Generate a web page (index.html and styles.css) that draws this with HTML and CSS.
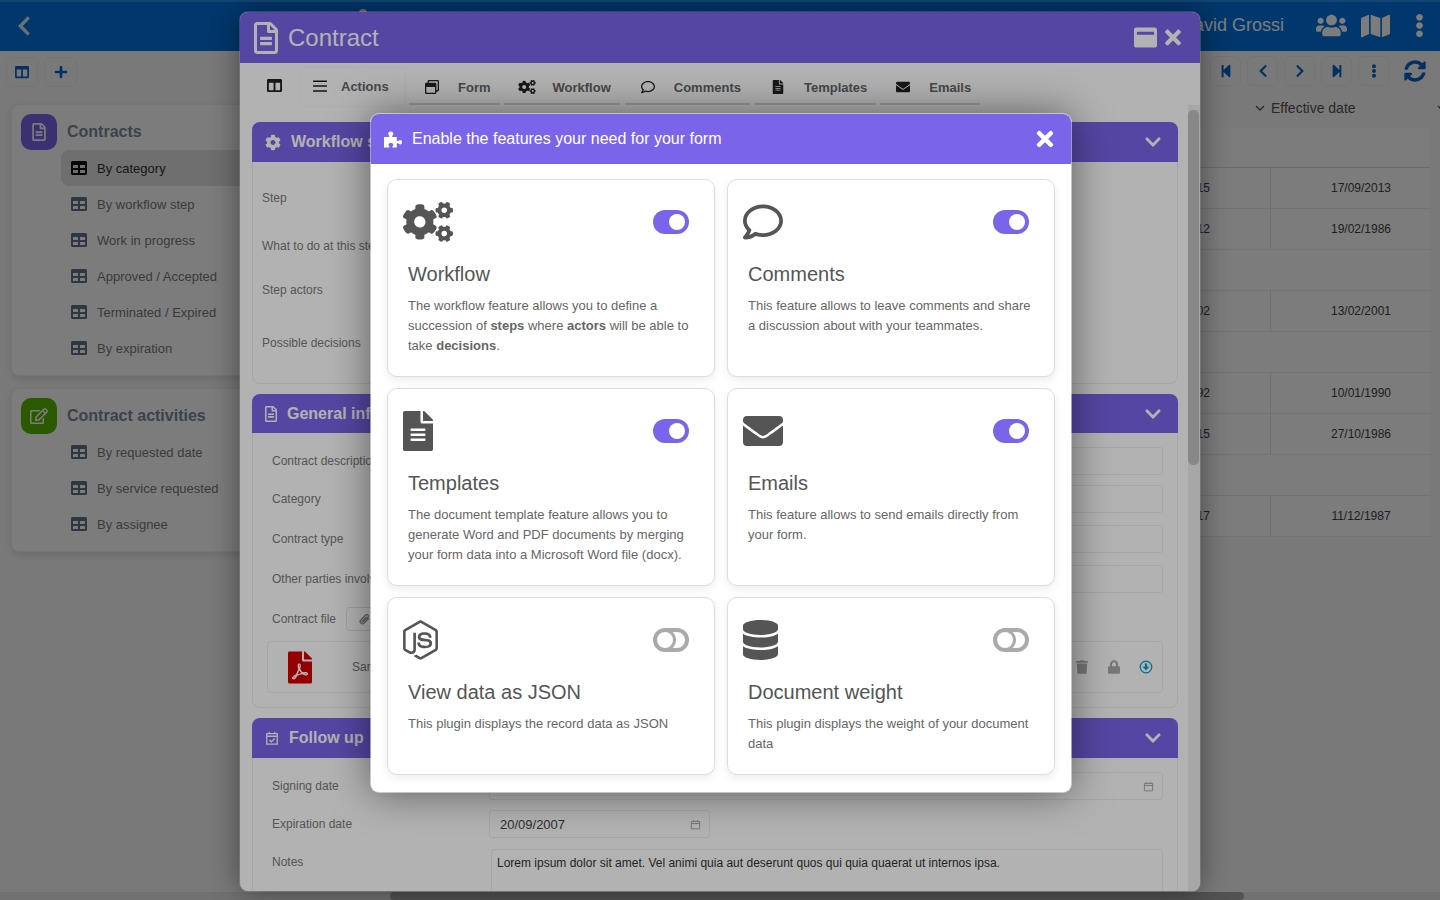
FILE: index.html
```html
<!DOCTYPE html>
<html lang="en">
<head>
  <meta charset="UTF-8" />
  <title>Contract</title>
  <link rel="stylesheet" href="styles.css">
</head>
<body>
  <!-- icon sprite -->
  <svg class="sprite" xmlns="http://www.w3.org/2000/svg">
    <symbol id="i-file" viewBox="0 0 384 512"><path d="M224 136V0H24C10.7 0 0 10.7 0 24v464c0 13.3 10.7 24 24 24h336c13.3 0 24-10.7 24-24V160H248c-13.2 0-24-10.8-24-24zm64 236c0 6.6-5.4 12-12 12H108c-6.6 0-12-5.4-12-12v-8c0-6.6 5.4-12 12-12h168c6.6 0 12 5.4 12 12v8zm0-64c0 6.6-5.4 12-12 12H108c-6.6 0-12-5.4-12-12v-8c0-6.6 5.4-12 12-12h168c6.6 0 12 5.4 12 12v8zm0-72v8c0 6.6-5.4 12-12 12H108c-6.6 0-12-5.4-12-12v-8c0-6.6 5.4-12 12-12h168c6.6 0 12 5.4 12 12zm96-114.1v6.1H256V0h6.1c6.4 0 12.5 2.5 17 7l97.9 98c4.5 4.5 7 10.6 7 16.9z"/></symbol>
    <symbol id="i-file-o" viewBox="0 0 384 512"><path d="M288 248v28c0 6.6-5.4 12-12 12H108c-6.6 0-12-5.4-12-12v-28c0-6.6 5.4-12 12-12h168c6.6 0 12 5.4 12 12zm-12 72H108c-6.6 0-12 5.4-12 12v28c0 6.6 5.4 12 12 12h168c6.6 0 12-5.4 12-12v-28c0-6.6-5.4-12-12-12zm108-188.1V464c0 26.5-21.5 48-48 48H48c-26.5 0-48-21.5-48-48V48C0 21.5 21.5 0 48 0h204.1C264.8 0 277 5.1 286 14.1L369.9 98c9 8.9 14.1 21.2 14.1 33.9zm-128-80V128h76.1L256 51.9zM336 464V176H232c-13.3 0-24-10.7-24-24V48H48v416h288z"/></symbol>
    <symbol id="i-envelope" viewBox="0 0 512 512"><path d="M502.3 190.8c3.9-3.1 9.7-.2 9.7 4.7V400c0 26.5-21.5 48-48 48H48c-26.5 0-48-21.5-48-48V195.6c0-5 5.7-7.8 9.7-4.7 22.4 17.4 52.1 39.5 154.1 113.6 21.1 15.4 56.7 47.8 92.2 47.6 35.7.3 72-32.8 92.3-47.6 102-74.1 131.6-96.3 154-113.7zM256 320c23.2.4 56.6-29.2 73.4-41.4 132.7-96.3 142.8-104.7 173.4-128.7 5.8-4.5 9.2-11.5 9.2-18.9v-19c0-26.5-21.5-48-48-48H48C21.5 64 0 85.5 0 112v19c0 7.4 3.4 14.3 9.2 18.9 30.6 23.9 40.7 32.4 173.4 128.7 16.8 12.2 50.2 41.8 73.4 41.4z"/></symbol>
    <symbol id="i-database" viewBox="0 0 448 512"><path d="M448 73.143v45.714C448 159.143 347.667 192 224 192S0 159.143 0 118.857V73.143C0 32.857 100.333 0 224 0s224 32.857 224 73.143zM448 176v102.857C448 319.143 347.667 352 224 352S0 319.143 0 278.857V176c48.125 33.143 136.208 48.572 224 48.572S399.874 209.143 448 176zm0 160v102.857C448 479.143 347.667 512 224 512S0 479.143 0 438.857V336c48.125 33.143 136.208 48.572 224 48.572S399.874 369.143 448 336z"/></symbol>
    <symbol id="i-comment" viewBox="0 0 512 512"><path d="M256 32C114.6 32 0 125.1 0 240c0 47.6 19.9 91.2 52.9 126.3C38 405.7 7 439.1 6.5 439.5c-6.6 7-8.4 17.2-4.6 26S14.4 480 24 480c61.5 0 110-25.7 139.1-46.3C192 442.8 223.2 448 256 448c141.4 0 256-93.1 256-208S397.4 32 256 32zm0 368c-26.7 0-53.1-4.1-78.4-12.1l-22.7-7.2-19.5 13.8c-14.3 10.1-33.9 21.4-57.5 29 7.3-12.1 14.4-25.7 19.9-40.2l10.6-28.1-20.6-21.8C69.7 314.1 48 282.2 48 240c0-88.2 93.3-160 208-160s208 71.8 208 160-93.3 160-208 160z"/></symbol>
    <symbol id="i-cogs" viewBox="0 0 640 512"><path d="M512.1 191l-8.2 14.3c-3 5.3-9.4 7.5-15.1 5.4-11.8-4.4-22.6-10.7-32.1-18.6-4.6-3.8-5.8-10.5-2.8-15.7l8.2-14.3c-6.9-8-12.3-17.3-15.9-27.4h-16.5c-6 0-11.2-4.3-12.2-10.3-2-12-2.1-24.6 0-37.1 1-6 6.2-10.4 12.2-10.4h16.5c3.6-10.1 9-19.4 15.9-27.4l-8.2-14.3c-3-5.2-1.9-11.9 2.8-15.7 9.5-7.9 20.4-14.2 32.1-18.6 5.7-2.1 12.1.1 15.1 5.4l8.2 14.3c10.5-1.9 21.2-1.9 31.7 0L552 6.3c3-5.3 9.4-7.5 15.1-5.4 11.8 4.4 22.6 10.7 32.1 18.6 4.6 3.8 5.8 10.5 2.8 15.7l-8.2 14.3c6.9 8 12.3 17.3 15.9 27.4h16.5c6 0 11.2 4.3 12.2 10.3 2 12 2.1 24.6 0 37.1-1 6-6.2 10.4-12.2 10.4h-16.5c-3.6 10.1-9 19.4-15.9 27.4l8.2 14.3c3 5.2 1.9 11.9-2.8 15.7-9.5 7.9-20.4 14.2-32.1 18.6-5.7 2.1-12.1-.1-15.1-5.4l-8.2-14.3c-10.4 1.9-21.2 1.9-31.7 0zm-10.5-58.8c38.5 29.6 82.4-14.3 52.8-52.8-38.5-29.7-82.4 14.3-52.8 52.8zM386.3 286.1l33.7 16.8c10.1 5.8 14.5 18.1 10.5 29.1-8.9 24.2-26.4 46.4-42.6 65.8-7.4 8.9-20.2 11.1-30.3 5.3l-29.1-16.8c-16 13.7-34.6 24.6-54.9 31.7v33.6c0 11.6-8.3 21.6-19.7 23.6-24.6 4.2-50.4 4.4-75.9 0-11.5-2-20-11.9-20-23.6V418c-20.3-7.2-38.9-18-54.9-31.7L74 403c-10 5.8-22.9 3.6-30.3-5.3-16.2-19.4-33.3-41.6-42.2-65.7-4-10.9.4-23.2 10.5-29.1l33.3-16.8c-3.9-20.9-3.9-42.4 0-63.4L12 205.8c-10.1-5.8-14.6-18.1-10.5-29 8.9-24.2 26-46.4 42.2-65.8 7.4-8.9 20.2-11.1 30.3-5.3l29.1 16.8c16-13.7 34.6-24.6 54.9-31.7V57.1c0-11.5 8.2-21.5 19.6-23.5 24.6-4.2 50.5-4.4 76-.1 11.5 2 20 11.9 20 23.6v33.6c20.3 7.2 38.9 18 54.9 31.7l29.1-16.8c10-5.8 22.9-3.6 30.3 5.3 16.2 19.4 33.2 41.6 42.1 65.8 4 10.9.1 23.2-10 29.1l-33.7 16.8c3.9 21 3.9 42.5 0 63.5zm-117.6 21.1c59.2-77-28.7-164.9-105.7-105.7-59.2 77 28.7 164.9 105.7 105.7zm243.4 182.7l-8.2 14.3c-3 5.3-9.4 7.5-15.1 5.4-11.8-4.4-22.6-10.7-32.1-18.6-4.6-3.8-5.8-10.5-2.8-15.7l8.2-14.3c-6.9-8-12.3-17.3-15.9-27.4h-16.5c-6 0-11.2-4.3-12.2-10.3-2-12-2.1-24.6 0-37.1 1-6 6.2-10.4 12.2-10.4h16.5c3.6-10.1 9-19.4 15.9-27.4l-8.2-14.3c-3-5.2-1.9-11.9 2.8-15.7 9.5-7.9 20.4-14.2 32.1-18.6 5.7-2.1 12.1.1 15.1 5.4l8.2 14.3c10.5-1.9 21.2-1.9 31.7 0l8.2-14.3c3-5.3 9.4-7.5 15.1-5.4 11.8 4.4 22.6 10.7 32.1 18.6 4.6 3.8 5.8 10.5 2.8 15.7l-8.2 14.3c6.9 8 12.3 17.3 15.9 27.4h16.5c6 0 11.2 4.3 12.2 10.3 2 12 2.1 24.6 0 37.1-1 6-6.2 10.4-12.2 10.4h-16.5c-3.6 10.1-9 19.4-15.9 27.4l8.2 14.3c3 5.2 1.9 11.9-2.8 15.7-9.5 7.9-20.4 14.2-32.1 18.6-5.7 2.1-12.1-.1-15.1-5.4l-8.2-14.3c-10.4 1.9-21.2 1.9-31.7 0zM501.6 431c38.5 29.6 82.4-14.3 52.8-52.8-38.5-29.6-82.4 14.3-52.8 52.8z"/></symbol>
    <symbol id="i-node" viewBox="0 0 448 512"><path d="M224 508c-6.7 0-13.5-1.8-19.4-5.2l-61.7-36.5c-9.2-5.2-4.7-7-1.7-8 12.3-4.3 14.8-5.2 27.9-12.7 1.4-.8 3.2-.5 4.6.4l47.4 28.1c1.7 1 4.1 1 5.7 0l184.7-106.6c1.7-1 2.8-3 2.8-5V149.3c0-2.1-1.1-4-2.9-5.1L226.8 37.7c-1.7-1-4-1-5.7 0L36.6 144.3c-1.8 1-2.9 3-2.9 5.1v213.1c0 2 1.1 4 2.9 4.9l50.6 29.2c27.5 13.7 44.3-2.4 44.3-18.7V167.5c0-3 2.4-5.3 5.4-5.3h23.4c2.9 0 5.4 2.3 5.4 5.3V378c0 36.6-20 57.6-54.7 57.6-10.7 0-19.1 0-42.5-11.6l-48.4-27.9C8.1 389.2.7 376.3.7 362.4V149.3c0-13.8 7.4-26.8 19.4-33.7L204.6 9c11.7-6.6 27.2-6.6 38.8 0l184.7 106.7c12 6.9 19.4 19.8 19.4 33.7v213.1c0 13.8-7.4 26.7-19.4 33.7L243.4 502.8c-5.9 3.4-12.6 5.2-19.4 5.2zm149.1-210.1c0-39.9-27-50.5-83.7-58-57.4-7.6-63.2-11.5-63.2-24.9 0-11.1 4.9-25.9 47.4-25.9 37.9 0 51.9 8.2 57.7 33.8.5 2.4 2.7 4.2 5.2 4.2h24c1.5 0 2.9-.6 3.9-1.7s1.5-2.6 1.4-4.1c-3.7-44.1-33-64.6-92.2-64.6-52.7 0-84.1 22.2-84.1 59.5 0 40.4 31.3 51.6 81.8 56.6 60.5 5.9 65.2 14.8 65.2 26.7 0 20.6-16.6 29.4-55.5 29.4-48.9 0-59.6-12.3-63.2-36.6-.4-2.6-2.6-4.5-5.3-4.5h-23.9c-3 0-5.3 2.4-5.3 5.3 0 31.1 16.9 68.2 97.8 68.2 58.4-.1 92-23.2 92-63.4z"/></symbol>
    <symbol id="i-puzzle" viewBox="0 3.500 19 17"><path d="M0 9.500h4.600c1 0 1-.9.4-1.600-.5-.6-.8-1.100-.8-1.900C4.200 4.800 5.400 4 6.800 4s2.600.8 2.600 2c0 .8-.3 1.300-.8 1.900-.6.7-.6 1.600.4 1.600h3.800v3.400c0 1 .9 1 1.600.4.6-.5 1.100-.8 1.900-.8 1.200 0 1.700 1 1.700 2.200s-.5 2.200-1.700 2.200c-.8 0-1.300-.3-1.900-.8-.7-.6-1.600-.6-1.600.4V20H9c-.8 0-.9-.8-.4-1.300.5-.5.7-.9.7-1.500 0-1-1-1.700-2.400-1.700s-2.400.7-2.400 1.700c0 .6.2 1 .7 1.500.5.5.4 1.300-.4 1.300H0z"/></symbol>
    <symbol id="i-chev-left" viewBox="0 0 320 512"><path d="M34.52 239.03L228.87 44.69c9.37-9.37 24.57-9.37 33.94 0l22.67 22.67c9.36 9.36 9.37 24.52.04 33.9L131.49 256l154.02 154.75c9.34 9.38 9.32 24.54-.04 33.9l-22.67 22.67c-9.37 9.37-24.57 9.37-33.94 0L34.52 272.97c-9.37-9.37-9.37-24.57 0-33.94z"/></symbol>
    <symbol id="i-chev-right" viewBox="0 0 320 512"><path d="M285.476 272.971L91.132 467.314c-9.373 9.373-24.569 9.373-33.941 0l-22.667-22.667c-9.357-9.357-9.375-24.522-.04-33.901L188.505 256 34.484 101.255c-9.335-9.379-9.317-24.544.04-33.901l22.667-22.667c9.373-9.373 24.569-9.373 33.941 0L285.475 239.03c9.373 9.372 9.373 24.568.001 33.941z"/></symbol>
    <symbol id="i-chev-down" viewBox="0 0 448 512"><path d="M207.029 381.476L12.686 187.132c-9.373-9.373-9.373-24.569 0-33.941l22.667-22.667c9.357-9.357 24.522-9.375 33.901-.04L224 284.505l154.745-154.021c9.379-9.335 24.544-9.317 33.901.04l22.667 22.667c9.373 9.373 9.373 24.569 0 33.941L240.971 381.476c-9.373 9.372-24.569 9.372-33.942 0z"/></symbol>
    <symbol id="i-chev-thin" viewBox="0 0 10 10"><path fill="none" stroke="currentColor" stroke-width="1.400" d="M1 3l4 4 4-4"/></symbol>
    <symbol id="i-times" viewBox="0 0 352 512"><path d="M242.72 256l100.07-100.07c12.28-12.28 12.28-32.19 0-44.48l-22.24-22.24c-12.28-12.28-32.19-12.28-44.48 0L176 189.28 75.93 89.21c-12.28-12.28-32.19-12.28-44.48 0L9.21 111.45c-12.28 12.28-12.28 32.19 0 44.48L109.28 256 9.21 356.07c-12.28 12.28-12.28 32.19 0 44.48l22.24 22.24c12.28 12.28 32.2 12.28 44.48 0L176 322.72l100.07 100.07c12.28 12.28 32.2 12.28 44.48 0l22.24-22.24c12.28-12.28 12.28-32.19 0-44.48L242.72 256z"/></symbol>
    <symbol id="i-table" viewBox="0 0 512 512"><path d="M464 32H48C21.49 32 0 53.49 0 80v352c0 26.51 21.49 48 48 48h416c26.51 0 48-21.49 48-48V80c0-26.51-21.49-48-48-48zM224 416H64v-96h160v96zm0-160H64v-96h160v96zm224 160H288v-96h160v96zm0-160H288v-96h160v96z"/></symbol>
    <symbol id="i-users" viewBox="0 0 640 512"><path d="M96 224c35.3 0 64-28.7 64-64s-28.7-64-64-64-64 28.7-64 64 28.7 64 64 64zm448 0c35.3 0 64-28.7 64-64s-28.7-64-64-64-64 28.7-64 64 28.7 64 64 64zm32 32h-64c-17.6 0-33.5 7.1-45.1 18.6 40.3 22.1 68.9 62 75.1 109.4h66c17.7 0 32-14.3 32-32v-32c0-35.3-28.7-64-64-64zm-256 0c61.9 0 112-50.1 112-112S381.9 32 320 32 208 82.1 208 144s50.1 112 112 112zm76.8 32h-8.3c-20.8 10-43.9 16-68.5 16s-47.6-6-68.5-16h-8.3C179.6 288 128 339.6 128 403.2V432c0 26.5 21.5 48 48 48h288c26.5 0 48-21.5 48-48v-28.8c0-63.6-51.6-115.2-115.2-115.2zm-223.7-13.4C161.5 263.1 145.6 256 128 256H64c-35.3 0-64 28.7-64 64v32c0 17.7 14.3 32 32 32h65.9c6.3-47.4 34.9-87.3 75.2-109.4z"/></symbol>
    <symbol id="i-map" viewBox="0 0 576 512"><path d="M0 117.66v346.32c0 11.32 11.43 19.06 21.94 14.86L160 416V32L20.12 87.95A32.006 32.006 0 0 0 0 117.66zM192 416l192 64V96L192 32v384zM554.06 33.16L416 96v384l139.88-55.95A31.996 31.996 0 0 0 576 394.34V48.02c0-11.32-11.43-19.06-21.94-14.86z"/></symbol>
    <symbol id="i-dots" viewBox="0 0 192 512"><path d="M96 184c39.8 0 72 32.2 72 72s-32.2 72-72 72-72-32.2-72-72 32.2-72 72-72zM24 80c0 39.8 32.2 72 72 72s72-32.2 72-72S135.8 8 96 8 24 40.2 24 80zm0 352c0 39.8 32.2 72 72 72s72-32.2 72-72-32.2-72-72-72-72 32.2-72 72z"/></symbol>
    <symbol id="i-plus" viewBox="0 0 448 512"><path d="M416 208H272V64c0-17.67-14.33-32-32-32h-32c-17.67 0-32 14.33-32 32v144H32c-17.67 0-32 14.33-32 32v32c0 17.67 14.33 32 32 32h144v144c0 17.67 14.33 32 32 32h32c17.67 0 32-14.33 32-32V304h144c17.67 0 32-14.33 32-32v-32c0-17.67-14.33-32-32-32z"/></symbol>
    <symbol id="i-columns" viewBox="0 0 512 512"><path d="M464 32H48C21.49 32 0 53.49 0 80v352c0 26.51 21.49 48 48 48h416c26.51 0 48-21.49 48-48V80c0-26.51-21.49-48-48-48zM224 416H64V160h160v256zm224 0H288V160h160v256z"/></symbol>
    <symbol id="i-bars" viewBox="0 0 448 512"><path d="M0 76h448v48H0zM0 232h448v48H0zM0 388h448v48H0z"/></symbol>
    <symbol id="i-window" viewBox="0 0 512 512"><path d="M464 0H144c-26.5 0-48 21.5-48 48v48H48c-26.5 0-48 21.5-48 48v320c0 26.5 21.5 48 48 48h320c26.5 0 48-21.5 48-48v-48h48c26.5 0 48-21.5 48-48V48c0-26.5-21.5-48-48-48zm-96 464H48V256h320v208zm96-96h-48V144c0-26.5-21.5-48-48-48H144V48h320v320z"/></symbol>
    <symbol id="i-maximize" viewBox="0 0 512 512"><path d="M464 32H48C21.5 32 0 53.5 0 80v352c0 26.5 21.5 48 48 48h416c26.5 0 48-21.5 48-48V80c0-26.5-21.5-48-48-48zm-16 160H64v-48c0-8.8 7.2-16 16-16h352c8.8 0 16 7.2 16 16v48z"/></symbol>
    <symbol id="i-cog" viewBox="0 0 512 512"><path d="M487.4 315.7l-42.6-24.6c4.3-23.2 4.3-47 0-70.2l42.6-24.6c4.9-2.8 7.1-8.6 5.5-14-11.1-35.6-30-67.8-54.7-94.6-3.8-4.1-10-5.1-14.8-2.3L380.8 110c-17.9-15.4-38.5-27.3-60.8-35.1V25.8c0-5.6-3.9-10.5-9.4-11.7-36.7-8.2-74.3-7.8-109.2 0-5.5 1.2-9.4 6.1-9.4 11.7V75c-22.2 7.9-42.8 19.8-60.8 35.1L88.7 85.5c-4.9-2.8-11-1.9-14.8 2.3-24.7 26.7-43.6 58.9-54.7 94.6-1.7 5.4.6 11.2 5.5 14L67.3 221c-4.3 23.2-4.3 47 0 70.2l-42.6 24.6c-4.9 2.8-7.1 8.6-5.5 14 11.1 35.6 30 67.8 54.7 94.6 3.8 4.1 10 5.1 14.8 2.3l42.6-24.6c17.9 15.4 38.5 27.3 60.8 35.1v49.2c0 5.6 3.9 10.5 9.4 11.7 36.7 8.2 74.3 7.8 109.2 0 5.5-1.2 9.4-6.1 9.4-11.7v-49.2c22.2-7.9 42.8-19.8 60.8-35.1l42.6 24.6c4.9 2.8 11 1.9 14.8-2.3 24.7-26.7 43.6-58.9 54.7-94.6 1.5-5.5-.7-11.3-5.6-14.1zM256 336c-44.1 0-80-35.9-80-80s35.9-80 80-80 80 35.9 80 80-35.9 80-80 80z"/></symbol>
    <symbol id="i-sync" viewBox="0 0 512 512"><path d="M370.72 133.28C339.458 104.008 298.888 87.962 255.848 88c-77.458.068-144.328 53.178-162.791 126.85-1.344 5.363-6.122 9.15-11.651 9.15H24.103c-7.498 0-13.194-6.807-11.807-14.176C33.933 94.924 134.813 8 256 8c66.448 0 126.791 26.136 171.315 68.685L463.03 40.97C478.149 25.851 504 36.559 504 57.941V192c0 13.255-10.745 24-24 24H345.941c-21.382 0-32.09-25.851-16.971-40.971l41.75-41.749zM32 296h134.059c21.382 0 32.09 25.851 16.971 40.971l-41.75 41.75c31.262 29.273 71.835 45.319 114.876 45.28 77.418-.07 144.315-53.144 162.787-126.849 1.344-5.363 6.122-9.15 11.651-9.15h57.304c7.498 0 13.194 6.807 11.807 14.176C478.067 417.076 377.187 504 256 504c-66.448 0-126.791-26.136-171.315-68.685L48.97 471.03C33.851 486.149 8 475.441 8 454.059V320c0-13.255 10.745-24 24-24z"/></symbol>
    <symbol id="i-step-back" viewBox="0 0 448 512"><path d="M64 468V44c0-6.6 5.4-12 12-12h48c6.6 0 12 5.4 12 12v176.4l195.5-181C352.1 22.3 384 36.6 384 64v384c0 27.4-31.9 41.7-52.5 24.6L136 292.7V468c0 6.6-5.4 12-12 12H76c-6.6 0-12-5.4-12-12z"/></symbol>
    <symbol id="i-step-fwd" viewBox="0 0 448 512"><path d="M384 44v424c0 6.6-5.4 12-12 12h-48c-6.6 0-12-5.4-12-12V291.6l-195.5 181C95.9 489.7 64 475.4 64 448V64c0-27.4 31.9-41.7 52.5-24.6L312 219.3V44c0-6.6 5.4-12 12-12h48c6.6 0 12 5.4 12 12z"/></symbol>
    <symbol id="i-trash" viewBox="0 0 448 512"><path d="M432 32H312l-9.4-18.7A24 24 0 0 0 281.1 0H166.8a23.72 23.72 0 0 0-21.4 13.3L136 32H16A16 16 0 0 0 0 48v32a16 16 0 0 0 16 16h416a16 16 0 0 0 16-16V48a16 16 0 0 0-16-16zM53.2 467a48 48 0 0 0 47.9 45h245.8a48 48 0 0 0 47.9-45L416 128H32z"/></symbol>
    <symbol id="i-lock" viewBox="0 0 448 512"><path d="M400 224h-24v-72C376 68.2 307.8 0 224 0S72 68.2 72 152v72H48c-26.5 0-48 21.5-48 48v192c0 26.5 21.5 48 48 48h352c26.5 0 48-21.5 48-48V272c0-26.5-21.5-48-48-48zm-104 0H152v-72c0-39.7 32.3-72 72-72s72 32.3 72 72v72z"/></symbol>
    <symbol id="i-edit" viewBox="0 0 576 512"><path d="M402.3 344.9l32-32c5-5 13.7-1.5 13.7 5.7V464c0 26.5-21.5 48-48 48H48c-26.5 0-48-21.5-48-48V112c0-26.5 21.5-48 48-48h273.5c7.1 0 10.7 8.6 5.7 13.7l-32 32c-1.5 1.5-3.5 2.3-5.7 2.3H48v352h352V350.5c0-2.1.8-4.1 2.3-5.6zm156.6-201.8L296.3 405.7l-90.4 10c-26.2 2.9-48.5-19.2-45.6-45.6l10-90.4L432.9 17.1c22.9-22.9 59.9-22.9 82.7 0l43.2 43.2c22.9 22.9 22.9 60 .1 82.8zM460.1 174L402 115.9 216.2 301.8l-7.3 65.3 65.3-7.3L460.1 174zm64.8-79.7l-43.2-43.2c-4.1-4.1-10.8-4.1-14.8 0L436 82l58.1 58.1 30.9-30.9c4-4.2 4-10.8-.1-14.9z"/></symbol>
    <symbol id="i-pdf" viewBox="0 0 384 512"><path d="M181.9 256.1c-5-16-4.9-46.9-2-46.9 8.4 0 7.6 36.9 2 46.9zm-1.7 47.2c-7.7 20.2-17.3 43.3-28.4 62.7 18.3-7 39-17.2 62.9-21.9-12.7-9.6-24.9-23.4-34.5-40.8zM86.1 428.1c0 .8 13.2-5.4 34.9-40.2-6.7 6.3-29.1 24.5-34.9 40.2zM248 160h136v328c0 13.3-10.7 24-24 24H24c-13.3 0-24-10.7-24-24V24C0 10.7 10.7 0 24 0h200v136c0 13.2 10.8 24 24 24zm-8 171.8c-20-12.2-33.3-29-42.7-53.8 4.5-18.5 11.6-46.6 6.2-64.2-4.7-29.4-42.4-26.5-47.8-6.8-5 18.3-.4 44.1 8.1 77-11.6 27.6-28.7 64.6-40.8 85.8-.1 0-.1.1-.2.1-27.1 13.9-73.6 44.5-54.5 68 5.6 6.9 16 10 21.5 10 17.9 0 35.7-18 61.1-61.8 25.8-8.5 54.1-19.1 79-23.2 21.7 11.8 47.1 19.5 64 19.5 29.2 0 31.2-32 19.7-43.4-13.9-13.6-54.3-9.7-73.6-7.2zM377 105L279 7c-4.5-4.5-10.6-7-17-7h-6v128h128v-6.1c0-6.3-2.5-12.4-7-16.9zm-74.1 255.3c4.1-2.7-2.5-11.9-42.8-9 37.1 15.8 42.8 9 42.8 9z"/></symbol>
    <symbol id="i-cal" viewBox="0 0 16 16"><path fill="none" stroke="currentColor" stroke-width="1.4" d="M2 3.500h12v10.800H2zM2 6.500h12M5 1.500v2M11 1.500v2"/></symbol>
    <symbol id="i-cal-check" viewBox="0 0 16 16"><path fill="none" stroke="currentColor" stroke-width="1.5" d="M2 3h12v12H2zM2 6h12M5 .8V3M11 .8V3M5 10.300l2.200 2L11 8.500"/></symbol>
    <symbol id="i-clip" viewBox="0 0 16 16"><path fill="none" stroke="currentColor" stroke-width="1.5" stroke-linecap="round" d="M13 7l-5.500 5.500a2.800 2.800 0 0 1-4-4L9.500 2.500a1.900 1.900 0 0 1 2.700 2.700L6.500 11a.9.9 0 0 1-1.300-1.300L10 5"/></symbol>
    <symbol id="i-down" viewBox="0 0 16 16"><circle cx="8" cy="8" r="6.600" fill="none" stroke="currentColor" stroke-width="1.4"/><path d="M6.700 4h2.600v3.600H12L8 11.800 4 7.600h2.700z"/></symbol>
  </svg>

  <!-- page behind the windows -->
  <div class="app">
    <header class="topbar">
      <svg class="ico back"><use href="#i-chev-left"/></svg>
      <span class="topbar-dot"></span>
      <span class="user-name">David Grossi</span>
      <svg class="ico topbar-users"><use href="#i-users"/></svg>
      <svg class="ico topbar-map"><use href="#i-map"/></svg>
      <svg class="ico topbar-dots"><use href="#i-dots"/></svg>
    </header>

    <div class="toolbar">
      <button class="tool-btn"><svg class="ico"><use href="#i-columns"/></svg></button>
      <button class="tool-btn"><svg class="ico"><use href="#i-plus"/></svg></button>
      <div class="pager">
        <button class="tool-btn"><svg class="ico"><use href="#i-step-back"/></svg></button>
        <button class="tool-btn"><svg class="ico"><use href="#i-chev-left"/></svg></button>
        <button class="tool-btn"><svg class="ico"><use href="#i-chev-right"/></svg></button>
        <button class="tool-btn"><svg class="ico"><use href="#i-step-fwd"/></svg></button>
        <button class="tool-btn"><svg class="ico"><use href="#i-dots"/></svg></button>
        <svg class="ico refresh"><use href="#i-sync"/></svg>
      </div>
    </div>

    <main class="main">
      <nav class="sidebar">
        <section class="menu-card">
          <div class="menu-head">
            <span class="menu-icon purple"><svg class="ico"><use href="#i-file-o"/></svg></span>
            <span class="menu-title">Contracts</span>
          </div>
          <a class="menu-item active"><svg class="ico"><use href="#i-table"/></svg>By category</a>
          <a class="menu-item"><svg class="ico"><use href="#i-table"/></svg>By workflow step</a>
          <a class="menu-item"><svg class="ico"><use href="#i-table"/></svg>Work in progress</a>
          <a class="menu-item"><svg class="ico"><use href="#i-table"/></svg>Approved / Accepted</a>
          <a class="menu-item"><svg class="ico"><use href="#i-table"/></svg>Terminated / Expired</a>
          <a class="menu-item"><svg class="ico"><use href="#i-table"/></svg>By expiration</a>
        </section>
        <section class="menu-card">
          <div class="menu-head">
            <span class="menu-icon green"><svg class="ico"><use href="#i-edit"/></svg></span>
            <span class="menu-title">Contract activities</span>
          </div>
          <a class="menu-item"><svg class="ico"><use href="#i-table"/></svg>By requested date</a>
          <a class="menu-item"><svg class="ico"><use href="#i-table"/></svg>By service requested</a>
          <a class="menu-item"><svg class="ico"><use href="#i-table"/></svg>By assignee</a>
        </section>
      </nav>

      <div class="table-wrap">
        <div class="t-head">
          <span class="t-th first"></span>
          <span class="t-th"><svg class="ico"><use href="#i-chev-thin"/></svg>Effective date</span>
          <span class="t-th"><svg class="ico"><use href="#i-chev-thin"/></svg></span>
        </div>
        <div class="t-filter"></div>
        <div class="t-row"><span class="t-cell left">15</span><span class="t-cell">17/09/2013</span></div>
        <div class="t-row"><span class="t-cell left">12</span><span class="t-cell">19/02/1986</span></div>
        <div class="t-row group"></div>
        <div class="t-row"><span class="t-cell left">02</span><span class="t-cell">13/02/2001</span></div>
        <div class="t-row group"></div>
        <div class="t-row"><span class="t-cell left">92</span><span class="t-cell">10/01/1990</span></div>
        <div class="t-row"><span class="t-cell left">15</span><span class="t-cell">27/10/1986</span></div>
        <div class="t-row group"></div>
        <div class="t-row"><span class="t-cell left">17</span><span class="t-cell">11/12/1987</span></div>
      </div>
    </main>

    <div class="page-scroll"><span class="page-scroll-thumb"></span></div>
  </div>

  <div class="dim"></div>

  <!-- record window -->
  <div class="window">
    <div class="win-head">
      <svg class="ico win-icon"><use href="#i-file-o"/></svg>
      <span class="win-title">Contract</span>
      <svg class="ico win-max"><use href="#i-maximize"/></svg>
      <svg class="ico win-close"><use href="#i-times"/></svg>
    </div>

    <div class="win-tools">
      <span class="win-split"><svg class="ico"><use href="#i-columns"/></svg></span>
      <span class="win-actions"><svg class="ico"><use href="#i-bars"/></svg>Actions</span>
      <a class="tab"><svg class="ico"><use href="#i-window"/></svg>Form</a>
      <a class="tab"><svg class="ico wide"><use href="#i-cogs"/></svg>Workflow</a>
      <a class="tab"><svg class="ico"><use href="#i-comment"/></svg>Comments</a>
      <a class="tab"><svg class="ico"><use href="#i-file"/></svg>Templates</a>
      <a class="tab"><svg class="ico"><use href="#i-envelope"/></svg>Emails</a>
    </div>

    <div class="win-body">
      <div class="win-scroll"><span class="win-thumb"></span></div>

      <section class="panel">
        <div class="panel-head">
          <svg class="ico"><use href="#i-cog"/></svg>
          <span class="panel-title">Workflow step</span>
          <svg class="ico chev"><use href="#i-chev-down"/></svg>
        </div>
        <div class="panel-body wf">
          <div class="wf-row r48">Step</div>
          <div class="wf-row r48">What to do at this step</div>
          <div class="wf-row r40">Step actors</div>
          <div class="wf-row r66">Possible decisions</div>
        </div>
      </section>

      <section class="panel">
        <div class="panel-head low">
          <svg class="ico narrow"><use href="#i-file-o"/></svg>
          <span class="panel-title">General information</span>
          <svg class="ico chev"><use href="#i-chev-down"/></svg>
        </div>
        <div class="panel-body form">
          <div class="field f38"><label>Contract description</label><span class="input"></span></div>
          <div class="field f37"><label>Category</label><span class="input"></span></div>
          <div class="field f44"><label>Contract type</label><span class="input"></span></div>
          <div class="field f36"><label>Other parties involved</label><span class="input"></span></div>
          <div class="field f44"><label>Contract file</label><button class="clip-btn"><svg class="ico"><use href="#i-clip"/></svg></button></div>
          <div class="file-row">
            <svg class="ico file-pdf"><use href="#i-pdf"/></svg>
            <span class="file-name">Sample.pdf</span>
            <svg class="ico file-act"><use href="#i-trash"/></svg>
            <svg class="ico file-act"><use href="#i-lock"/></svg>
            <svg class="ico file-act teal"><use href="#i-down"/></svg>
          </div>
        </div>
      </section>

      <section class="panel">
        <div class="panel-head">
          <svg class="ico mid"><use href="#i-cal-check"/></svg>
          <span class="panel-title">Follow up</span>
          <svg class="ico chev"><use href="#i-chev-down"/></svg>
        </div>
        <div class="panel-body form">
          <div class="field f38"><label>Signing date</label><span class="input date"><svg class="ico"><use href="#i-cal"/></svg></span></div>
          <div class="field f38"><label>Expiration date</label><span class="input date short">20/09/2007<svg class="ico"><use href="#i-cal"/></svg></span></div>
          <div class="field notes"><label>Notes</label><div class="textarea">Lorem ipsum dolor sit amet. Vel animi quia aut deserunt quos qui quia quaerat ut internos ipsa.</div></div>
        </div>
      </section>
    </div>
  </div>

  <div class="dim"></div>

  <!-- features dialog -->
  <div class="modal">
    <div class="modal-head">
      <svg class="ico modal-puzzle"><use href="#i-puzzle"/></svg>
      <span class="modal-title">Enable the features your need for your form</span>
      <svg class="ico modal-close"><use href="#i-times"/></svg>
    </div>
    <div class="features">
      <article class="feature">
        <div class="feature-top">
          <svg class="ico big w50"><use href="#i-cogs"/></svg>
          <span class="toggle on"></span>
        </div>
        <h3>Workflow</h3>
        <p>The workflow feature allows you to define a succession of <b>steps</b> where <b>actors</b> will be able to take <b>decisions</b>.</p>
      </article>
      <article class="feature">
        <div class="feature-top">
          <svg class="ico big"><use href="#i-comment"/></svg>
          <span class="toggle on"></span>
        </div>
        <h3>Comments</h3>
        <p>This feature allows to leave comments and share a discussion about with your teammates.</p>
      </article>
      <article class="feature">
        <div class="feature-top">
          <svg class="ico big w30"><use href="#i-file"/></svg>
          <span class="toggle on"></span>
        </div>
        <h3>Templates</h3>
        <p>The document template feature allows you to generate Word and PDF documents by merging your form data into a Microsoft Word file (docx).</p>
      </article>
      <article class="feature">
        <div class="feature-top">
          <svg class="ico big"><use href="#i-envelope"/></svg>
          <span class="toggle on"></span>
        </div>
        <h3>Emails</h3>
        <p>This feature allows to send emails directly from your form.</p>
      </article>
      <article class="feature">
        <div class="feature-top">
          <svg class="ico big w35"><use href="#i-node"/></svg>
          <span class="toggle off"></span>
        </div>
        <h3>View data as JSON</h3>
        <p>This plugin displays the record data as JSON</p>
      </article>
      <article class="feature">
        <div class="feature-top">
          <svg class="ico big w35"><use href="#i-database"/></svg>
          <span class="toggle off"></span>
        </div>
        <h3>Document weight</h3>
        <p>This plugin displays the weight of your document data</p>
      </article>
    </div>
  </div>
</body>
</html>
```

FILE: styles.css
```css
* {
  box-sizing: border-box;
}

html, body {
  margin: 0;
  height: 900px;
  overflow: hidden;
}

body {
  font-family: "Liberation Sans", Arial, sans-serif;
  font-size: 13px;
  color: #666;
  background-color: #fafafa;
}

button {
  font: inherit;
  padding: 0;
}

.sprite {
  display: none;
}

.ico {
  display: block;
  fill: currentColor;
  flex: none;
}

/* page behind */
.app {
  display: flex;
  flex-direction: column;
  height: 900px;
  overflow: hidden;
}

.topbar {
  display: flex;
  align-items: center;
  height: 51px;
  flex: none;
  padding: 0 0 2px 16px;
  color: #fff;
  background-color: #0073e0;
  border-top: 2px solid #2a8fe8;
}

.back {
  width: 16px;
  height: 22px;
  color: #d8e4f2;
}

.topbar-dot {
  align-self: flex-start;
  width: 8px;
  height: 8px;
  margin: 7px auto 0 327px;
  border-radius: 50%;
  background-color: #eee;
}

.user-name {
  font-size: 18px;
  margin-right: 32px;
}

.topbar-users {
  width: 31px;
  height: 25px;
  margin-right: 14px;
}

.topbar-map {
  width: 29px;
  height: 26px;
  margin-right: 25px;
}

.topbar-dots {
  width: 9px;
  height: 25px;
  margin-right: 16px;
}

.toolbar {
  display: flex;
  align-items: flex-start;
  height: 37px;
  flex: none;
  padding: 6px 0 0 6px;
  gap: 6px;
}

.tool-btn {
  display: flex;
  align-items: center;
  justify-content: center;
  width: 32px;
  height: 30px;
  color: #0a63c8;
  background-color: #fafafa;
  border: 1px solid #f0f0f0;
  border-radius: 6px;
}

.tool-btn .ico {
  width: 14px;
  height: 14px;
}

.toolbar > .tool-btn:nth-child(2) {
  width: 33px;
}

.pager {
  display: flex;
  align-items: center;
  gap: 6px;
  margin: -1px 0 0 auto;
  padding-right: 14px;
}

.pager .tool-btn {
  width: 31px;
}

.refresh {
  width: 22px;
  height: 22px;
  margin-left: 9px;
  color: #0a63c8;
}

.main {
  display: flex;
  flex: 1;
  min-height: 0;
}

.sidebar {
  width: 270px;
  padding: 16px 0 0 11px;
}

.menu-card {
  padding: 9px 0 9px 9px;
  margin-bottom: 12px;
  background-color: #fff;
  border: 1px solid #f2f2f2;
  border-radius: 8px;
  box-shadow: 0 3px 8px rgba(0, 0, 0, 0.12);
}

.menu-head {
  display: flex;
  align-items: center;
  height: 36px;
  gap: 10px;
}

.menu-icon {
  display: flex;
  align-items: center;
  justify-content: center;
  width: 36px;
  height: 36px;
  border-radius: 10px;
  color: #fff;
}

.menu-icon .ico {
  width: 18px;
  height: 18px;
}

.menu-icon.purple {
  background-color: #7a65ea;
}

.menu-icon.purple .ico {
  width: 14px;
}

.menu-icon.green {
  background-color: #59b800;
}

.menu-title {
  font-size: 16px;
  font-weight: bold;
  color: #7c8a9c;
}

.menu-item {
  display: flex;
  align-items: center;
  height: 36px;
  margin-left: 40px;
  padding-left: 10px;
  gap: 10px;
  color: #7a7a7a;
}

.menu-item .ico {
  width: 16px;
  height: 16px;
  color: #617289;
}

.menu-item.active {
  color: #333;
  background-color: #e4e4e4;
  border-radius: 8px 0 0 8px;
}

.menu-item.active .ico {
  color: #111;
}

.table-wrap {
  width: 352px;
  margin-left: auto;
  overflow: hidden;
  font-size: 12px;
  color: #444;
}

.t-head {
  display: flex;
  height: 39px;
  font-size: 14px;
  color: #555;
}

.t-th {
  display: flex;
  align-items: center;
  width: 182px;
  flex: none;
  gap: 6px;
  white-space: nowrap;
}

.t-th.first {
  width: 167px;
}

.t-th .ico {
  width: 10px;
  height: 10px;
}

.t-filter {
  height: 41px;
  margin-right: 10px;
  background-color: rgba(255, 255, 255, 0.6);
  border-bottom: 1px solid #ddd;
}

.t-row {
  display: flex;
  height: 41px;
  margin-right: 10px;
  background-color: #fff;
  border-bottom: 1px solid #ececec;
}

.t-cell {
  display: flex;
  align-items: center;
  justify-content: center;
  width: 182px;
  padding-right: 2px;
  flex: none;
}

.t-cell.left {
  width: 183px;
  justify-content: flex-end;
  padding-right: 60px;
  border-right: 1px solid #e6e6e6;
}

.page-scroll {
  position: absolute;
  left: 0;
  right: 0;
  bottom: 0;
  height: 8px;
  background-color: #e8e8e8;
}

.page-scroll-thumb {
  display: block;
  width: 854px;
  height: 8px;
  margin-left: 390px;
  border-radius: 4px;
  background-color: #aaa;
}

/* dark layer under each window */
.dim {
  position: absolute;
  inset: 0;
  background-color: rgba(0, 0, 0, 0.3);
}

/* record window */
.window {
  position: absolute;
  left: 240px;
  top: 12px;
  width: 960px;
  height: 879px;
  display: flex;
  flex-direction: column;
  overflow: hidden;
  background-color: #fff;
  border-radius: 8px;
  box-shadow: 0 0 0 1px rgba(255, 255, 255, 0.25), 0 0 30px rgba(0, 0, 0, 0.45);
}

.win-head {
  display: flex;
  align-items: center;
  height: 51px;
  flex: none;
  padding: 0 19px 0 14px;
  color: #fff;
  background-color: #7a65ea;
}

.win-icon {
  width: 24px;
  height: 32px;
}

.win-title {
  margin-left: 10px;
  font-size: 24px;
}

.win-max {
  width: 23px;
  height: 23px;
  margin-left: auto;
}

.win-close {
  width: 16px;
  height: 23px;
  margin-left: 8px;
}

.win-tools {
  display: flex;
  align-items: stretch;
  height: 42px;
  flex: none;
  padding: 5px 0 0 18px;
  font-weight: bold;
  color: #666;
}

.win-tools .ico {
  width: 16px;
  height: 14px;
  color: #222;
}

.win-split {
  display: flex;
  align-items: center;
  justify-content: center;
  width: 32px;
  padding-bottom: 3px;
}

.win-split .ico {
  width: 15px;
  height: 15px;
}

.win-actions {
  display: flex;
  align-items: center;
  width: 103px;
  margin: 0 5px 0 11px;
  padding: 0 0 1px 12px;
  gap: 14px;
  border-radius: 4px;
  box-shadow: 0 0 4px rgba(0, 0, 0, 0.04);
}

.win-actions .ico {
  width: 14px;
  height: 16px;
}

.tab {
  display: flex;
  align-items: center;
  padding: 3px 9px 0 15px;
  margin-right: 5px;
  border-bottom: 2px solid #d8d8d8;
  white-space: nowrap;
}

.tab:first-of-type,
.tab:nth-of-type(4) {
  margin-right: 4px;
}

.tab .ico {
  margin-right: 18px;
}

.tab .ico.wide {
  width: 18px;
  margin: 0 17px 0 -1px;
}

.win-body {
  position: relative;
  flex: 1;
  min-height: 0;
  padding: 17px 22px 0 12px;
  overflow: hidden;
}

.win-scroll {
  position: absolute;
  right: 0;
  top: 0;
  bottom: 0;
  width: 12px;
  background-color: #f0f0f0;
}

.win-thumb {
  display: block;
  margin-top: 5px;
  height: 355px;
  width: 11px;
  border-radius: 5px;
  background-color: #c2c2c2;
}

.panel {
  margin-bottom: 10px;
  border-radius: 8px;
  border: 1px solid #eee;
  border-top: none;
}

.panel-head {
  display: flex;
  align-items: center;
  height: 40px;
  margin: 0 -1px;
  padding: 0 17px 0 13px;
  gap: 10px;
  color: #fff;
  background-color: #7a65ea;
  border-radius: 8px 8px 0 0;
}

.panel-head.low {
  height: 39px;
}

.panel-head .ico {
  width: 16px;
  height: 17px;
}

.panel-head .ico.narrow {
  width: 12px;
  height: 16px;
}

.panel-head .ico.mid {
  width: 14px;
  height: 16px;
}

.panel-title {
  font-size: 16px;
  font-weight: bold;
}

.panel-head .chev {
  margin-left: auto;
  width: 16px;
  height: 18px;
}

.wf {
  padding: 12px 0 7px 9px;
  font-size: 12px;
  color: #7a7a7a;
}

.wf-row {
  display: flex;
  align-items: center;
}

.r48 { height: 48px; }
.r40 { height: 40px; }
.r66 { height: 66px; }

.form {
  padding: 9px 14px 14px 19px;
  font-size: 12px;
  color: #7a7a7a;
}

.field {
  display: flex;
  align-items: center;
}

.field label {
  width: 217px;
  flex: none;
}

.f36 { height: 36px; }
.f37 { height: 37px; }
.f38 { height: 38px; }
.f44 { height: 44px; }

.input {
  display: flex;
  align-items: center;
  flex: 1;
  height: 28px;
  padding: 0 10px;
  font-size: 13px;
  color: #444;
  border: 1px solid #eee;
  border-radius: 3px;
}

.input.date .ico {
  width: 11px;
  height: 11px;
  margin-left: auto;
  margin-right: -2px;
  color: #aaa;
}

.input.short {
  flex: none;
  width: 221px;
}

.clip-btn {
  display: flex;
  align-items: center;
  justify-content: center;
  width: 36px;
  height: 24px;
  margin-left: -143px;
  color: #888;
  background: none;
  border: 1px solid #e4e4e4;
  border-radius: 4px;
}

.clip-btn .ico {
  width: 13px;
  height: 13px;
}

.file-row {
  display: flex;
  align-items: center;
  height: 52px;
  margin-left: -5px;
  padding: 0 9px 0 20px;
  gap: 20px;
  border: 1px solid #eee;
  border-radius: 4px;
}

.file-pdf {
  width: 24px;
  height: 33px;
  color: #d40000;
}

.file-name {
  margin: 0 auto 0 20px;
  font-size: 12px;
}

.file-act {
  width: 12px;
  height: 14px;
  color: #aaa;
}

.file-act.teal {
  width: 14px;
  margin-left: -1px;
  color: #0f9bd0;
}

.notes {
  align-items: flex-start;
  margin-top: 6px;
}

.notes label {
  margin-top: 6px;
}

.textarea {
  flex: 1;
  height: 120px;
  margin-left: 2px;
  padding: 6px 5px;
  font-size: 12px;
  color: #333;
  border: 1px solid #eee;
  border-radius: 3px;
}

/* features dialog */
.modal {
  position: absolute;
  left: 371px;
  top: 114px;
  width: 700px;
  height: 678px;
  overflow: hidden;
  background-color: #fff;
  border-radius: 8px;
  box-shadow: 0 0 0 1px rgba(255, 255, 255, 0.5), 0 0 40px rgba(0, 0, 0, 0.5);
}

.modal-head {
  display: flex;
  align-items: center;
  height: 50px;
  padding: 0 17px 0 13px;
  color: #fff;
  background-color: #7a65ea;
}

.modal-puzzle {
  width: 19px;
  height: 17px;
}

.modal-title {
  margin-left: 9px;
  font-size: 16px;
}

.modal-close {
  width: 18px;
  height: 24px;
  margin-left: auto;
}

.features {
  display: grid;
  grid-template-columns: 328.5px 328.5px;
  gap: 11px 11.5px;
  padding: 15px 15.5px;
}

.feature {
  padding: 22px 20px 20px 15.5px;
  background-color: #fff;
  border: 1px solid #ddd;
  border-radius: 10px;
  box-shadow: 0 3px 8px rgba(0, 0, 0, 0.08);
}

.feature-top {
  display: flex;
  align-items: center;
  justify-content: space-between;
  height: 40px;
  margin-right: 5px;
}

.feature .big {
  width: 40px;
  height: 40px;
  color: #555;
}

.feature .big.w50 { width: 50px; }
.feature .big.w35 { width: 35px; }
.feature .big.w30 { width: 30px; }

.toggle {
  position: relative;
  width: 36px;
  height: 24px;
  border-radius: 12px;
}

.toggle.on {
  background-color: #7a65ea;
}

.toggle.on::after {
  content: "";
  position: absolute;
  right: 4px;
  top: 4px;
  width: 16px;
  height: 16px;
  border-radius: 50%;
  background-color: #fff;
}

.toggle.off {
  overflow: hidden;
  background-color: #fff;
  border: 4px solid #aaa;
}

.toggle.off::after {
  content: "";
  position: absolute;
  left: 0;
  top: 0;
  width: 16px;
  height: 16px;
  border-radius: 50%;
  background-color: #fff;
  box-shadow: 0 0 0 3px #aaa;
}

.feature h3 {
  margin: 20px 0 0 5px;
  font-size: 20px;
  font-weight: normal;
  line-height: 24px;
  color: #555;
}

.feature p {
  margin: 10px 0 0 5px;
  font-size: 13px;
  line-height: 20px;
  color: #666;
}
```
